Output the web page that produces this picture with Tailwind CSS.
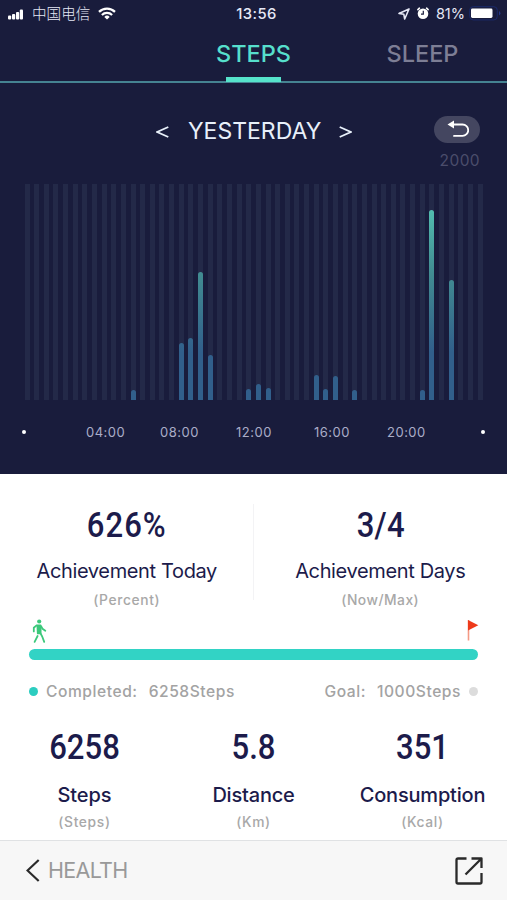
<!DOCTYPE html>
<html lang="en">
<head>
    <meta charset="UTF-8">
    <meta name="viewport" content="width=device-width, initial-scale=1.0">
    <title>Steps</title>
    <script src="https://cdn.jsdelivr.net/npm/@tailwindcss/browser@4"></script>
</head>
<body class="bg-white font-['Inter','Noto_Sans_CJK_SC',sans-serif] overflow-hidden">
<div class="w-[507px] h-[900px] flex flex-col overflow-hidden">

    <!-- Dark section -->
    <section class="h-[474px] shrink-0 bg-[#191c3c] flex flex-col">
        <!-- Status bar -->
        <div class="h-7 grid grid-cols-3 items-center text-[#e6e8f6] text-sm leading-7">
            <div class="flex items-center pl-2">
                <svg class="mt-px w-[15px] h-[11px]" viewBox="0 0 15 11" fill="#fff">
                    <rect x="0" y="6.5" width="3.2" height="4" rx="1"/>
                    <rect x="4" y="5" width="3.2" height="5.5" rx="1"/>
                    <rect x="8" y="3" width="3.2" height="7.5" rx="1"/>
                    <rect x="11.8" y="0.5" width="3.2" height="10" rx="1"/>
                </svg>
                <span class="ml-[9px] text-[14.6px] font-light">中国电信</span>
                <svg class="ml-2 -mt-0.5 w-[18px] h-[13px]" viewBox="0 0 18 13" fill="none" stroke="#fff" stroke-width="2.2">
                    <path d="M1 4.9a11.3 11.3 0 0 1 16 0"/>
                    <path d="M3.9 8a7.2 7.2 0 0 1 10.2 0"/>
                    <path d="M9 12.6L6.3 9.9a3.8 3.8 0 0 1 5.4 0z" fill="#fff" stroke="none"/>
                </svg>
            </div>
            <div class="text-center text-[14.8px] font-medium tracking-[0.4px] pl-1.5">13:56</div>
            <div class="flex items-center justify-end pr-1.5">
                <svg class="w-3 h-3" viewBox="0 0 12 12" fill="none" stroke="#e6e8f6" stroke-width="1.6" stroke-linejoin="round">
                    <path d="M11 1L1 5.4l4.8.8.9 4.8z"/>
                </svg>
                <svg class="ml-[7px] -mt-0.5 w-3 h-[13px]" viewBox="0 0 12 13">
                    <circle cx="6" cy="6.8" r="5.3" fill="#fff"/>
                    <path d="M.9 2.6L2.4 1.2M11.1 2.6L9.6 1.2" stroke="#fff" stroke-width="1.6" stroke-linecap="round"/>
                    <path d="M6.3 3.8v3.3H4" fill="none" stroke="#191c3c" stroke-width="1.2"/>
                </svg>
                <span class="ml-[7px] text-[14.5px]">81%</span>
                <svg class="ml-1 -mt-px w-8 h-[15px]" viewBox="0 0 32 15">
                    <rect x="0.7" y="0.7" width="27.6" height="13.2" rx="3.5" fill="none" stroke="#1b2a6b"/>
                    <rect x="2" y="2.6" width="21.5" height="9.4" rx="1.4" fill="#fff"/>
                    <path d="M30 5v4.5q1.4-.8 1.4-2.2T30 5z" fill="#26388a"/>
                </svg>
            </div>
        </div>

        <!-- Tabs -->
        <div class="h-[55px] border-b-2 border-[#458392] grid grid-cols-3 text-[23.5px] font-medium leading-[51px] text-center">
            <div></div>
            <div class="relative text-[#56dfcc]">STEPS
                <div class="absolute left-[57px] top-[49px] w-[55px] h-[5px] bg-[#56e3cb]"></div>
            </div>
            <div class="text-[#7d7e95]">SLEEP</div>
        </div>

        <!-- Day switcher -->
        <div class="h-[67px] pt-[33px] pr-[27px] flex justify-end items-start text-[#e8f0fa]">
            <div class="h-7 flex items-center leading-7">
                <svg class="mt-[3px] w-[13px] h-3" viewBox="0 0 13 12" fill="none" stroke="#e8f0fa" stroke-width="1.8"><path d="M12.3 1L1.2 6l11.1 5"/></svg>
                <span class="ml-[19px] pt-px w-[133px] text-[23px] whitespace-nowrap">YESTERDAY</span>
                <svg class="mt-[3px] ml-[18px] w-[13px] h-3" viewBox="0 0 13 12" fill="none" stroke="#e8f0fa" stroke-width="1.8"><path d="M.7 1l11.1 5L.7 11"/></svg>
            </div>
            <div class="ml-[82px] w-[46px] h-[27px] rounded-full bg-[#444660] flex items-center justify-center">
                <svg class="ml-0.5 w-[22px] h-[19px]" viewBox="0 0 22 19" fill="none" stroke="#fff" stroke-width="1.8" stroke-linecap="round">
                    <path d="M6 4.5h9.5a5.7 5.7 0 0 1 0 11.4H7"/>
                    <path d="M.5 4.5L7 .6v7.8z" fill="#fff" stroke="none"/>
                </svg>
            </div>
        </div>
        <div class="h-[34px] pt-px pr-[27px] text-right text-[15.5px] leading-5 tracking-[0.4px] text-[#4b4d6b]">2000</div>

        <!-- Chart -->
        <div id="chart" class="h-[216px] ml-[24.5px] mr-[24px] flex justify-between"></div>
        <div class="h-16 flex items-center text-[13px] tracking-[0.5px] text-[#aaadc8]">
            <span class="ml-[22px] size-1 rounded-full bg-white"></span>
            <span class="ml-[60px] pt-px w-10">04:00</span>
            <span class="ml-[34px] pt-px w-10">08:00</span>
            <span class="ml-9 pt-px w-10">12:00</span>
            <span class="ml-[38px] pt-px w-10">16:00</span>
            <span class="ml-[33px] pt-px w-10">20:00</span>
            <span class="ml-auto mr-[22px] size-1 rounded-full bg-white"></span>
        </div>
    </section>

    <!-- Achievements -->
    <section class="h-[144px] shrink-0 grid grid-cols-2 text-center text-[#1c1b4b] relative">
        <div class="pt-[31px]">
            <div class="font-[Roboto] font-medium text-[34.5px] leading-10 tracking-[1.2px] scale-x-90">626%</div>
            <div class="mt-[13px] text-[20px] leading-[26px] tracking-[-0.36px]">Achievement Today</div>
            <div class="mt-[6px] text-[13.8px] leading-5 tracking-[0.65px] font-medium text-[#a8a8a8]">(Percent)</div>
        </div>
        <div class="pt-[31px]">
            <div class="font-[Roboto] font-medium text-[34.5px] leading-10 tracking-[0.3px] scale-x-90">3/4</div>
            <div class="mt-[13px] text-[20px] leading-[26px] tracking-[-0.36px]">Achievement Days</div>
            <div class="mt-[6px] text-[13.8px] leading-5 tracking-[0.5px] font-medium text-[#a8a8a8]">(Now/Max)</div>
        </div>
        <div class="absolute left-[253px] top-[30px] w-px h-24 bg-[#f3f3f5]"></div>
    </section>

    <!-- Progress -->
    <section class="h-[96px] shrink-0 px-7">
        <div class="flex justify-between h-[31px]">
            <svg class="ml-1 mt-px w-[15px] h-[25px]" viewBox="0 0 15 25" fill="none" stroke="#3cc87b" stroke-width="1.8" stroke-linecap="round" stroke-linejoin="round">
                <circle cx="7.2" cy="2.5" r="2.1" fill="#3cc87b" stroke="none"/>
                <path d="M5.4 6.4h3.2v8H5.8z" fill="#3cc87b"/>
                <path d="M4.6 6.4L1.8 8.8v3.6M9.2 7.4l1.3 2.4 2.8 2M8.5 14.4l1.7 3.1 2 5.4M5.6 17L2.6 22.9"/>
            </svg>
            <svg class="mt-[2px] w-3 h-[21px]" viewBox="0 0 12 21">
                <path d="M1.5 0v20.5" stroke="#f49a85" stroke-width="1.6"/>
                <path d="M1 0l10.3 5.2L1 10.6z" fill="#ee3a1b"/>
            </svg>
        </div>
        <div class="mx-px h-[11px] rounded-full bg-[#32d3c5]"></div>
        <div class="mt-[21px] flex items-center text-[15.6px] leading-5 tracking-[0.55px] font-medium text-[#a3a3a3]">
            <span class="ml-px size-[9px] rounded-full bg-[#2ccdc0]"></span>
            <span class="ml-2 pt-px">Completed:</span>
            <span class="ml-[11px] pt-px">6258Steps</span>
            <span class="ml-auto pt-px">Goal:</span>
            <span class="ml-[11px] pt-px">1000Steps</span>
            <span class="ml-2 mr-px size-[9px] rounded-full bg-[#dcdcdc]"></span>
        </div>
    </section>

    <!-- Totals -->
    <section class="h-[126px] shrink-0 grid grid-cols-3 text-center text-[#1c1b4b]">
        <div class="pt-[13px]">
            <div class="font-[Roboto] font-medium text-[34.5px] leading-10 scale-x-90">6258</div>
            <div class="mt-[15px] text-[20px] leading-[26px] font-medium tracking-[-0.1px]">Steps</div>
            <div class="mt-[4px] text-[13.8px] leading-5 tracking-[0.65px] font-medium text-[#a8a8a8]">(Steps)</div>
        </div>
        <div class="pt-[13px]">
            <div class="font-[Roboto] font-medium text-[34.5px] leading-10 scale-x-90">5.8</div>
            <div class="mt-[15px] text-[20px] leading-[26px] font-medium tracking-[-0.2px]">Distance</div>
            <div class="mt-[4px] text-[13.8px] leading-5 tracking-[0.65px] font-medium text-[#a8a8a8]">(Km)</div>
        </div>
        <div class="pt-[13px]">
            <div class="font-[Roboto] font-medium text-[34.5px] leading-10 scale-x-90">351</div>
            <div class="mt-[15px] text-[20px] leading-[26px] font-medium tracking-[-0.2px]">Consumption</div>
            <div class="mt-[4px] text-[13.8px] leading-5 tracking-[0.65px] font-medium text-[#a8a8a8]">(Kcal)</div>
        </div>
    </section>

    <!-- Bottom bar -->
    <footer class="h-[60px] shrink-0 border-t border-[#e0e2e4] bg-[#f7f7f7] flex items-center pl-[26px] pr-6">
        <svg class="w-[14px] h-[23px]" viewBox="0 0 14 23" fill="none" stroke="#2a2a2a" stroke-width="2.2"><path d="M12.7 1L1.5 11.5 12.7 22"/></svg>
        <span class="ml-2 text-[21.5px] tracking-[-0.7px] text-[#999]">HEALTH</span>
        <svg class="ml-auto w-[28px] h-[28px]" viewBox="0 0 28 28" fill="none" stroke="#2a2a2a" stroke-width="2.3" stroke-linejoin="round">
            <path d="M11.5 1.5H3Q1.5 1.5 1.5 3v22Q1.5 26.5 3 26.5h22q1.5 0 1.5-1.5V16"/>
            <path d="M16.5 1.5h10v9.5M26.5 1.5L10.5 17.5"/>
        </svg>
    </footer>
</div>

<script>
    // step bars: half-hour slot -> height in px
    const slots = 48;
    const bars = {
        11: 10, 16: 57, 17: 62, 18: 128.5, 19: 45,
        23: 11, 24: 16, 25: 12, 30: 25, 31: 11, 32: 24, 34: 10,
        41: 10, 42: 190, 44: 120
    };
    let html = '';
    for (let i = 0; i < slots; i++) {
        html += '<div class="w-[5px] h-full bg-[#232948] flex items-end">';
        if (bars[i]) {
            html += `<div class="w-full rounded-t-full bg-[linear-gradient(to_top,#315f8b_0%,#315f8b_22%,#418b91_58%,#53bfb0_90%)] bg-[length:100%_216px] bg-bottom bg-no-repeat" style="height:${bars[i]}px"></div>`;
        }
        html += '</div>';
    }
    document.getElementById('chart').innerHTML = html;
</script>
</body>
</html>
